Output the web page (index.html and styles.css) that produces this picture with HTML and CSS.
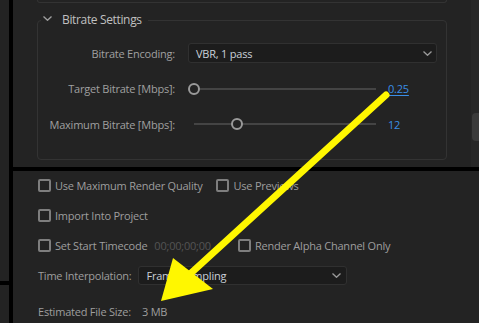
FILE: index.html
```html
<!DOCTYPE html>
<html>
<head>
<meta charset="utf-8">
<link rel="stylesheet" href="styles.css">
</head>
<body>
<div class="screen">
  <div class="side"><div class="side-line"></div></div>
  <div class="vsep"></div>
  <div class="main">
    <div class="top">
      <div class="content">
        <div class="prev-box"></div>
        <fieldset class="group">
          <legend class="group-title">
            <svg class="chev" width="9" height="5" viewBox="0 0 9 5"><path d="M0.5 0.5 L4.5 4.3 L8.5 0.5" fill="none" stroke="#a0a0a0" stroke-width="1.3"/></svg>
            <span>Bitrate Settings</span>
          </legend>
          <div class="form">
            <div class="label">Bitrate Encoding:</div>
            <div class="select select-wide">
              <span class="select-text">VBR, 1 pass</span>
              <svg width="9" height="5" viewBox="0 0 9 5"><path d="M0.5 0.5 L4.5 4.3 L8.5 0.5" fill="none" stroke="#9a9a9a" stroke-width="1.3"/></svg>
            </div>
            <div class="label">Target Bitrate [Mbps]:</div>
            <div class="slider-row">
              <div class="slider"><span class="knob" style="left:0px"></span></div>
              <span class="value underline">0.25</span>
            </div>
            <div class="label">Maximum Bitrate [Mbps]:</div>
            <div class="slider-row">
              <div class="slider"><span class="knob" style="left:43px"></span></div>
              <span class="value">12</span>
            </div>
          </div>
        </fieldset>
      </div>
      <div class="scrollbar"><div class="scroll-thumb"></div></div>
    </div>
    <div class="hband"></div>
    <div class="bottom">
      <div class="row">
        <label class="check"><span class="box"></span><span>Use Maximum Render Quality</span></label>
        <label class="check"><span class="box"></span><span>Use Previews</span></label>
      </div>
      <div class="row">
        <label class="check"><span class="box"></span><span>Import Into Project</span></label>
      </div>
      <div class="row">
        <label class="check"><span class="box"></span><span>Set Start Timecode</span></label>
        <span class="timecode">00;00;00;00</span>
        <label class="check check-alpha"><span class="box"></span><span>Render Alpha Channel Only</span></label>
      </div>
      <div class="row row-select">
        <span class="plain">Time Interpolation:</span>
        <div class="select select-small">
          <span class="select-text">Frame Sampling</span>
          <svg width="9" height="5" viewBox="0 0 9 5"><path d="M0.5 0.5 L4.5 4.3 L8.5 0.5" fill="none" stroke="#9a9a9a" stroke-width="1.3"/></svg>
        </div>
      </div>
      <div class="row row-last">
        <span class="plain">Estimated File Size:</span>
        <span class="plain size">3 MB</span>
      </div>
    </div>
  </div>
  <svg class="arrow" width="479" height="323" viewBox="0 0 479 323">
    <line x1="386" y1="95" x2="190" y2="274" stroke="#fff700" stroke-width="7" stroke-linecap="round"/>
    <polygon points="161,301 173,258 213,289" fill="#fff700"/>
  </svg>
</div>
</body>
</html>
```

FILE: styles.css
```css
* { box-sizing: border-box; }
html, body { margin: 0; padding: 0; background: #232323; }
body {
  font-family: "Open Sans", "Noto Sans", sans-serif;
  font-size: 11px;
  letter-spacing: -0.22px;
  color: #a0a0a0;
}
.screen {
  position: relative;
  width: 479px;
  height: 323px;
  display: flex;
  overflow: hidden;
  background: #232323;
}
.side { width: 9px; flex: none; }
.side-line { margin-top: 281px; height: 4px; background: #000; }
.vsep { width: 4px; flex: none; background: #000; }
.main { flex: 1; display: flex; flex-direction: column; }
.top { height: 167px; flex: none; display: flex; }
.content { flex: 1; padding: 0 24px; }
.prev-box {
  height: 3px;
  border: 1px solid #333;
  border-top: none;
  border-radius: 0 0 4px 4px;
}
.group {
  margin: 9px 0 0 0;
  padding: 0;
  border: 1px solid #333;
  border-radius: 4px;
  min-width: 0;
}
.group-title {
  margin-left: 3px;
  padding: 0 6px 0 2px;
  height: 16px;
  display: flex;
  align-items: center;
  color: #c0c0c0;
  font-size: 12px;
  letter-spacing: -0.35px;
  line-height: 16px;
}
.chev { margin-right: 10px; margin-top: -4px; }
.form {
  display: grid;
  grid-template-columns: 137px 249px;
  grid-template-rows: 20px 21px 20px;
  column-gap: 13px;
  row-gap: 15px;
  padding: 15px 0 25px 0;
  align-items: center;
}
.label { text-align: right; white-space: nowrap; color: #a0a0a0; }
.select {
  height: 20px;
  display: flex;
  align-items: center;
  justify-content: space-between;
  background: #1c1c1c;
  border: 1px solid #303030;
  border-radius: 3px;
  padding: 0 4px 0 7px;
}
.select-text { color: #c9d0d9; }
.select-wide { width: 249px; }
.slider-row { display: flex; align-items: center; gap: 12px; }
.slider { position: relative; width: 188px; height: 12px; }
.slider::before {
  content: "";
  position: absolute;
  left: 6px; right: 0; top: 5px;
  height: 2px;
  background: #444;
}
.knob {
  position: absolute;
  top: 0;
  width: 12px; height: 12px;
  border: 2px solid #9a9a9a;
  border-radius: 50%;
  background: #232323;
}
.value { color: #3a8ee6; }
.underline { text-decoration: underline; text-underline-offset: 2px; }
.scrollbar { width: 8px; flex: none; background: #272727; padding-top: 113px; }
.scroll-thumb { height: 28px; margin-left: 1px; background: #3a3a3a; border-radius: 4px 0 0 4px; }
.hband { height: 4px; flex: none; background: #000; }
.bottom {
  flex: 1;
  padding: 4px 0 0 25px;
  display: flex;
  flex-direction: column;
  gap: 10px;
}
.row { height: 20px; display: flex; align-items: center; white-space: nowrap; }
.row-last { margin-top: 6px; }
.check { display: flex; align-items: center; gap: 4px; color: #9e9e9e; }
.check + .check { margin-left: 14px; }
.box {
  width: 13px; height: 13px;
  border: 2px solid #7e7e7e;
  border-radius: 2px;
}
.timecode { color: #545454; margin-left: 7px; }
.check-alpha { margin-left: 27px; }
.plain { color: #9e9e9e; }
.select-small { width: 209px; margin-left: 7px; height: 19px; padding-right: 5px; }
.size { margin-left: 11px; }
.arrow { position: absolute; left: 0; top: 0; pointer-events: none; }
```
